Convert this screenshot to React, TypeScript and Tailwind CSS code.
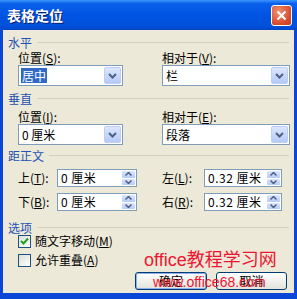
import React from "react";

function Key({ k }: { k: string }) {
  return (
    <>
      (<span className="underline">{k}</span>)
    </>
  );
}

function Heading({ text, className }: { text: string; className: string }) {
  return (
    <div className={`flex items-center h-[13px] leading-[13px] text-[#1F51B5] ${className}`}>
      <span>{text}</span>
      <div className="flex-1 ml-[5px] h-px bg-[#D0D0BF]" />
    </div>
  );
}

function DropBtn() {
  return (
    <div className="w-[17px] h-[17px] mr-px rounded-[2px] border border-[#BCCDF8] bg-gradient-to-b from-[#DCE6FD] to-[#B6CAF7] flex items-center justify-center">
      <svg width="9" height="6" viewBox="0 0 9 6">
        <path d="M1 1 L4.5 4.5 L8 1" stroke="#4D6185" strokeWidth="2" fill="none" />
      </svg>
    </div>
  );
}

function Combo({ w, value, selected }: { w: string; value: string; selected?: boolean }) {
  return (
    <div className={`${w} h-[21px] border border-[#7F9DB9] bg-white flex items-center`}>
      <div className="flex-1 pl-[2px] flex items-center">
        {selected ? (
          <span className="bg-[#316AC5] text-white px-px leading-[15px]">{value}</span>
        ) : (
          <span className="pl-px leading-[15px]">{value}</span>
        )}
      </div>
      <DropBtn />
    </div>
  );
}

function SpinHalf({ up }: { up?: boolean }) {
  return (
    <div className="flex-1 rounded-[1px] bg-gradient-to-b from-[#DCE6FD] to-[#B6CAF7] flex items-center justify-center">
      <svg width="7" height="4" viewBox="0 0 7 4">
        <path d={up ? "M0.5 3.5 L3.5 0.5 L6.5 3.5" : "M0.5 0.5 L3.5 3.5 L6.5 0.5"} stroke="#4D6185" strokeWidth="1.5" fill="none" />
      </svg>
    </div>
  );
}

function Spin({ label, k, w, lw, value }: { label: string; k: string; w: string; lw: string; value: string }) {
  return (
    <div className="flex items-center h-[18px]">
      <span className={`${lw} leading-[12px]`}>
        {label}
        <Key k={k} />:
      </span>
      <div className={`${w} h-[18px] border border-[#7F9DB9] bg-white flex`}>
        <div className="flex-1 pl-[3px] leading-[16px] tracking-[0.5px]">{value}</div>
        <div className="w-[15px] flex flex-col p-px gap-px">
          <SpinHalf up />
          <SpinHalf />
        </div>
      </div>
    </div>
  );
}

function Check({ checked, label, k, className }: { checked?: boolean; label: string; k: string; className: string }) {
  return (
    <div className={`flex items-center h-[14px] ${className}`}>
      <div className="w-[13px] h-[13px] border border-[#1C5180] bg-gradient-to-br from-[#DCDCD7] to-white flex items-center justify-center">
        {checked && (
          <svg width="9" height="9" viewBox="0 0 9 9">
            <path d="M1 4 L3.5 6.5 L8 1.5" stroke="#21A121" strokeWidth="2" fill="none" />
          </svg>
        )}
      </div>
      <span className="ml-[4px] leading-[12px]">
        {label}
        <Key k={k} />
      </span>
    </div>
  );
}

export default function App() {
  return (
    <div className="relative w-[297px] h-[299px] overflow-hidden bg-[#0A47D6] flex flex-col font-['Noto_Sans_CJK_SC',sans-serif] text-[12px] text-black">
      {/* title bar */}
      <div className="h-[30px] flex items-center pl-[7px] pr-[5px] bg-[linear-gradient(to_bottom,#3D95FF_0%,#0A5FEA_12%,#0054E3_50%,#0050DA_88%,#0046C8_100%)]">
        <span className="text-white font-bold text-[14px] leading-[15px] [text-shadow:1px_1px_#0A1E6E]">表格定位</span>
        <div className="ml-auto w-[21px] h-[21px] rounded-[3px] border border-white bg-[radial-gradient(circle_at_35%_30%,#F0906E,#D8492A_70%,#C23B1E)] flex items-center justify-center">
          <svg width="11" height="11" viewBox="0 0 11 11">
            <path d="M1.5 1.5 L9.5 9.5 M9.5 1.5 L1.5 9.5" stroke="white" strokeWidth="2.2" />
          </svg>
        </div>
      </div>

      {/* client */}
      <div className="flex-1 mx-[3px] mb-[6px] bg-[#ECE9D8] flex flex-col px-[5px]">
        <Heading text="水平" className="mt-[6px]" />
        <div className="ml-[10px] grid grid-cols-[144px_1fr]">
          <div className="mt-[3px] h-[12px] leading-[12px]">
            位置<Key k="S" />:
          </div>
          <div className="mt-[3px] h-[12px] leading-[12px]">
            相对于<Key k="V" />:
          </div>
          <div className="mt-px">
            <Combo w="w-[105px]" value="居中" selected />
          </div>
          <div className="mt-px">
            <Combo w="w-[128px]" value="栏" />
          </div>
        </div>

        <Heading text="垂直" className="mt-[6px]" />
        <div className="ml-[10px] grid grid-cols-[144px_1fr]">
          <div className="mt-[6px] h-[12px] leading-[12px]">
            位置<Key k="I" />:
          </div>
          <div className="mt-[6px] h-[12px] leading-[12px]">
            相对于<Key k="E" />:
          </div>
          <div className="mt-px">
            <Combo w="w-[105px]" value="0 厘米" />
          </div>
          <div className="mt-px">
            <Combo w="w-[128px]" value="段落" />
          </div>
        </div>

        <Heading text="距正文" className="mt-[4px]" />
        <div className="ml-[10px] grid grid-cols-[144px_1fr] gap-y-[6px] mt-[7px]">
          <Spin label="上" k="T" lw="w-[39px]" w="w-[80px]" value="0 厘米" />
          <Spin label="左" k="L" lw="w-[42px]" w="w-[78px]" value="0.32 厘米" />
          <Spin label="下" k="B" lw="w-[39px]" w="w-[80px]" value="0 厘米" />
          <Spin label="右" k="R" lw="w-[42px]" w="w-[78px]" value="0.32 厘米" />
        </div>

        <Heading text="选项" className="mt-[10px]" />
        <div className="ml-[10px]">
          <Check checked label="随文字移动" k="M" className="" />
          <Check label="允许重叠" k="A" className="mt-[5px]" />
        </div>

        <div className="flex justify-end gap-[9px] mt-[5px] mr-[2px]">
          <div className="w-[72px] h-[18px] rounded-[3px] border border-[#003C74] bg-gradient-to-b from-white to-[#E3E3DB] shadow-[inset_0_0_0_1px_#8FB0EC] flex items-center justify-center leading-[12px]">
            确定
          </div>
          <div className="w-[71px] h-[18px] rounded-[3px] border border-[#003C74] bg-gradient-to-b from-white to-[#E3E3DB] flex items-center justify-center leading-[12px]">
            取消
          </div>
        </div>
      </div>

      {/* watermark */}
      <div className="absolute left-[144px] top-[251px] text-[18px] leading-[18px] text-[#EE1530] font-['Liberation_Sans','Noto_Sans_CJK_SC',sans-serif]">
        office教程学习网
      </div>
      <div className="absolute left-[153px] top-[275px] text-[14px] leading-[14px] text-[#EE1530] font-['Liberation_Sans',sans-serif]">
        www.office68.com
      </div>
    </div>
  );
}
